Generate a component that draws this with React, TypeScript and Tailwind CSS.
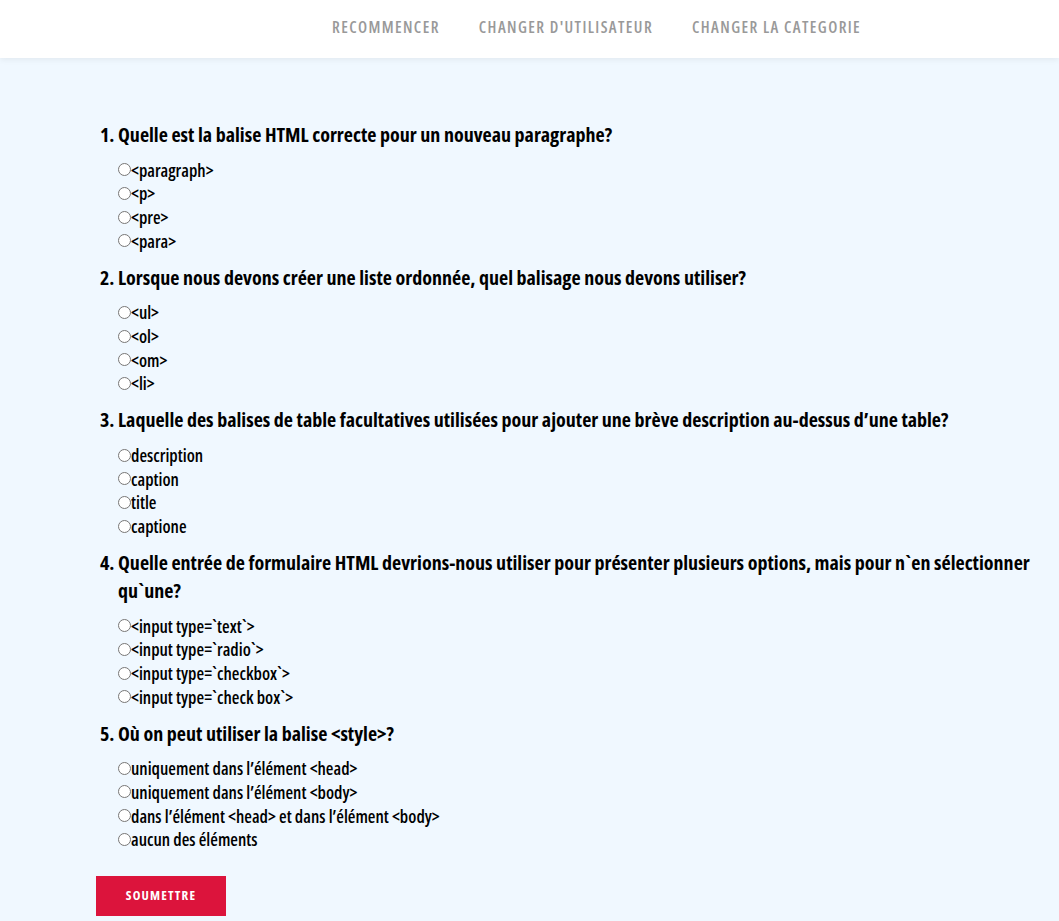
const questions = [
  {
    q: 'Quelle est la balise HTML correcte pour un nouveau paragraphe?',
    options: ['<paragraph>', '<p>', '<pre>', '<para>'],
  },
  {
    q: 'Lorsque nous devons créer une liste ordonnée, quel balisage nous devons utiliser?',
    options: ['<ul>', '<ol>', '<om>', '<li>'],
  },
  {
    q: 'Laquelle des balises de table facultatives utilisées pour ajouter une brève description au-dessus d’une table?',
    options: ['description', 'caption', 'title', 'captione'],
  },
  {
    q: 'Quelle entrée de formulaire HTML devrions-nous utiliser pour présenter plusieurs options, mais pour n`en sélectionner qu`une?',
    options: ['<input type=`text`>', '<input type=`radio`>', '<input type=`checkbox`>', '<input type=`check box`>'],
  },
  {
    q: 'Où on peut utiliser la balise <style>?',
    options: [
      'uniquement dans l’élément <head>',
      'uniquement dans l’élément <body>',
      'dans l’élément <head> et dans l’élément <body>',
      'aucun des éléments',
    ],
  },
];

export default function App() {
  return (
    <div className="min-h-screen bg-[#f0f8ff] font-['Open_Sans',sans-serif] font-stretch-[75%]">
      <header className="h-[58px] pb-[4px] bg-white shadow-[0_2px_6px_rgba(0,0,0,0.06)] flex items-center">
        <nav className="flex gap-[39px] pl-[332px] text-[16px] font-semibold tracking-[1.4px] text-[#999999] uppercase">
          <a href="#">Recommencer</a>
          <a href="#">Changer d'utilisateur</a>
          <a href="#">Changer la categorie</a>
        </nav>
      </header>

      <main className="pl-[96px] pr-[20px] pt-[62px] pb-1">
        <form>
          <ol className="list-decimal pl-[22px]">
            {questions.map((item, i) => (
              <li key={i} className="text-[20px] font-bold text-black mb-[10px]">
                <h2 className="leading-[28px]">{item.q}</h2>
                <div className="pt-[9px] flex flex-col">
                  {item.options.map((opt, j) => (
                    <label key={j} className="flex items-center h-[23.67px] text-[17.5px] font-semibold">
                      <input type="radio" name={`q${i}`} className="m-0 w-[13px] h-[13px]" />
                      <span>{opt}</span>
                    </label>
                  ))}
                </div>
              </li>
            ))}
          </ol>
          <button
            type="button"
            className="mt-[15px] w-[130px] h-[40px] bg-[#dc143c] text-white text-[13px] font-bold tracking-[1.2px] uppercase"
          >
            Soumettre
          </button>
        </form>
      </main>
    </div>
  );
}
